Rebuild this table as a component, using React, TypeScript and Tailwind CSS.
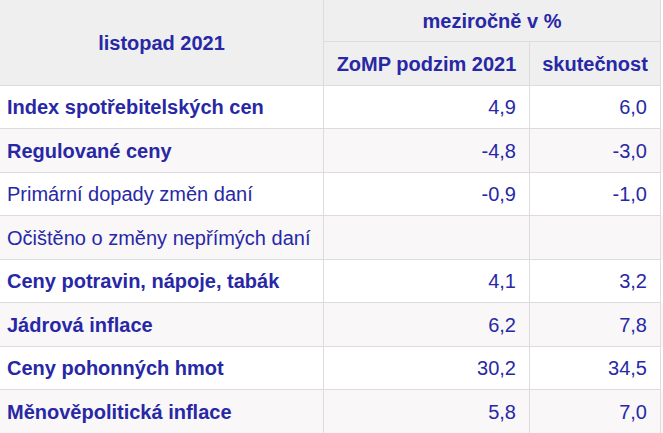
import React from "react";

type Row = { label: string; bold: boolean; a: string; b: string };

const rows: Row[] = [
  { label: "Index spotřebitelských cen", bold: true, a: "4,9", b: "6,0" },
  { label: "Regulované ceny", bold: true, a: "-4,8", b: "-3,0" },
  { label: "Primární dopady změn daní", bold: false, a: "-0,9", b: "-1,0" },
  { label: "Očištěno o změny nepřímých daní", bold: false, a: "", b: "" },
  { label: "Ceny potravin, nápoje, tabák", bold: true, a: "4,1", b: "3,2" },
  { label: "Jádrová inflace", bold: true, a: "6,2", b: "7,8" },
  { label: "Ceny pohonných hmot", bold: true, a: "30,2", b: "34,5" },
  { label: "Měnověpolitická inflace", bold: true, a: "5,8", b: "7,0" },
];

export default function App() {
  return (
    <div className="w-[663px] h-[433px] overflow-hidden bg-white text-[20px] text-[#2828a6] font-['Liberation_Sans',Arial,sans-serif]">
      <div className="grid grid-cols-[324px_206px_131px] grid-rows-[42px_44px]">
        <div className="row-span-2 flex items-center justify-center bg-[#efefef] border-r border-b border-[#dcdcdc] font-bold">
          listopad 2021
        </div>
        <div className="col-span-2 flex items-center justify-center bg-[#efefef] border-r border-b border-[#dcdcdc] font-bold">
          meziročně v %
        </div>
        <div className="flex items-center justify-center bg-[#efefef] border-r border-b border-[#dcdcdc] font-bold">
          ZoMP podzim 2021
        </div>
        <div className="flex items-center justify-center bg-[#efefef] border-r border-b border-[#dcdcdc] font-bold">
          skutečnost
        </div>
      </div>
      {rows.map((r, i) => {
        const cls =
          i % 2 === 0 ? "bg-white h-[43px]" : "bg-[#f9f7f8] h-[44px]";
        return (
          <div key={i} className={`grid grid-cols-[324px_206px_131px] ${cls}`}>
            <div
              className={`flex items-center pl-[7px] border-r border-b border-[#dcdcdc] ${
                r.bold ? "font-bold" : ""
              }`}
            >
              {r.label}
            </div>
            <div className="flex items-center justify-end pr-[13px] border-r border-b border-[#dcdcdc]">
              {r.a}
            </div>
            <div className="flex items-center justify-end pr-[13px] border-r border-b border-[#dcdcdc]">
              {r.b}
            </div>
          </div>
        );
      })}
    </div>
  );
}
